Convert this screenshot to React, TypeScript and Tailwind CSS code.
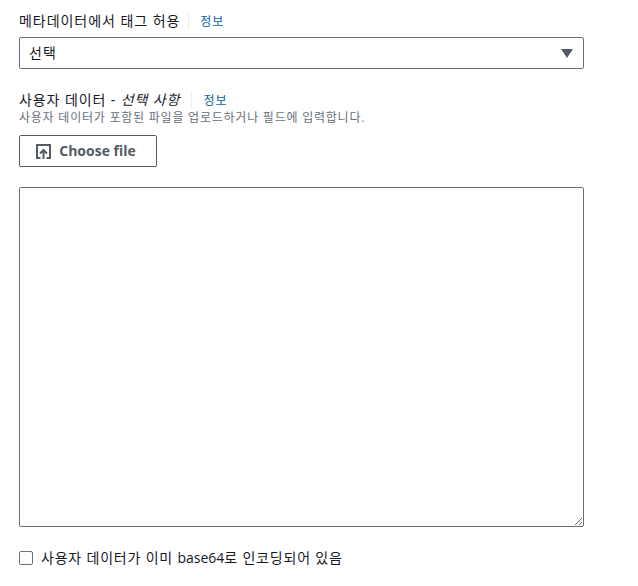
const font = { fontFamily: '"Open Sans", "Noto Sans CJK KR", sans-serif' }

function InfoLink() {
  return (
    <span className="h-[18px] border-l border-[#e9ebed] pl-[11px] pt-[1px] text-xs leading-[18px] tracking-[1px] text-[#0f5f9f]">
      정보
    </span>
  )
}

export default function App() {
  return (
    <div className="h-[586px] w-[638px] overflow-hidden bg-white pl-[19px] pt-[12px] text-[#16191f]" style={font}>
      {/* Metadata tags */}
      <div className="flex h-[18px] items-center">
        <span className="mr-[8px] text-sm leading-[18px] tracking-[0.95px]">메타데이터에서 태그 허용</span>
        <InfoLink />
      </div>
      <div className="mt-[7px] flex h-[32px] w-[565px] items-center justify-between rounded-[2px] border border-[#687078] pl-[9px] pr-[10px] text-sm tracking-[1px]">
        <span>선택</span>
        <svg width="12" height="9" viewBox="0 0 12 9">
          <path d="M0 0h12L6 9z" fill="#545b64" />
        </svg>
      </div>

      {/* User data */}
      <div className="mt-[22px] flex h-[18px] items-center">
        <span className="mr-[11px] text-sm leading-[18px] tracking-[0.9px]">
          사용자 데이터 - <em>선택 사항</em>
        </span>
        <InfoLink />
      </div>
      <p className="mt-[1px] text-xs leading-[16px] tracking-[0.77px] text-[#687078]">
        사용자 데이터가 포함된 파일을 업로드하거나 필드에 입력합니다.
      </p>
      <button className="mt-[9px] flex h-[32px] w-[138px] items-center justify-center gap-[8px] rounded-[2px] border border-[#545b64] bg-white pr-[4px] text-sm font-bold text-[#545b64]">
        <svg width="15" height="15" viewBox="0 0 15 15" fill="none" stroke="#545b64" strokeWidth="2">
          <path d="M4.500 14H1V1H14V14H10.500" />
          <path d="M7.500 15V6M4 9.500L7.500 6L11 9.500" />
        </svg>
        Choose file
      </button>
      <textarea
        readOnly
        className="mt-[20px] block h-[340px] w-[565px] rounded-[2px] border border-[#687078] bg-white"
      />

      {/* base64 checkbox */}
      <label className="mt-[22px] flex items-center gap-[8px]">
        <span className="mb-[1px] h-[14px] w-[14px] rounded-[2px] border border-[#687078]" />
        <span className="text-sm leading-[18px]">
          <span className="tracking-[0.8px]">사용자 데이터가 이미 </span>base64
          <span className="tracking-[0.8px]">로 인코딩되어 있음</span>
        </span>
      </label>
    </div>
  )
}
